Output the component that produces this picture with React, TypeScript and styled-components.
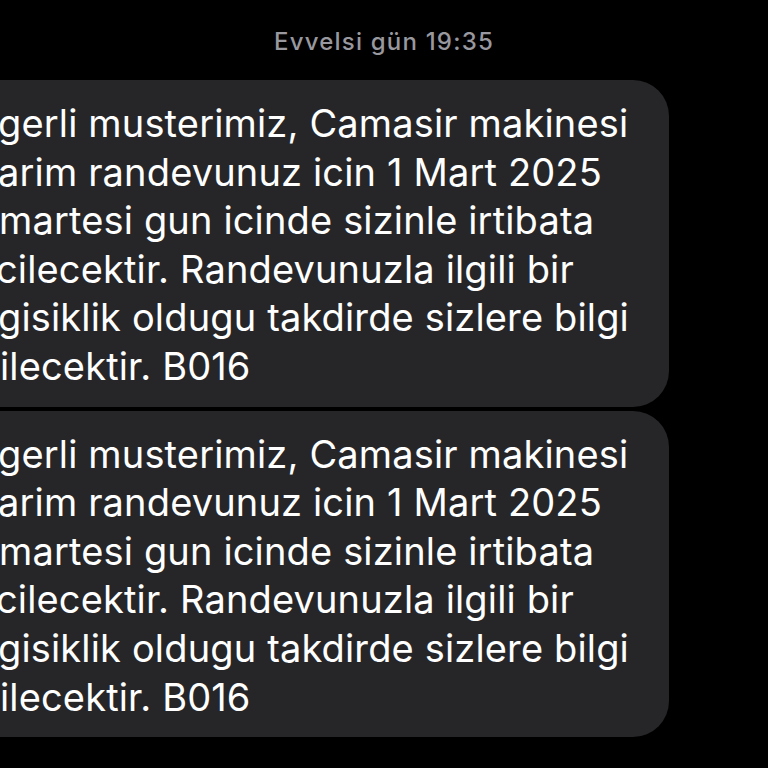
import React from "react";
import styled, { createGlobalStyle } from "styled-components";

const Global = createGlobalStyle`
  html, body { margin: 0; padding: 0; background: #000; }
  body { font-family: Inter, "Noto Sans", "Liberation Sans", sans-serif; -webkit-font-smoothing: antialiased; }
`;

const Page = styled.div`
  width: 768px;
  height: 768px;
  overflow: hidden;
  background: #000;
  display: flex;
  flex-direction: column;
`;

const Timestamp = styled.div`
  padding-top: 29px;
  height: 26px;
  line-height: 26px;
  margin-bottom: 25px;
  text-align: center;
  color: #98989e;
  font-size: 24px;
  font-weight: 500;
  letter-spacing: 1.2px;
`;

const Thread = styled.div`
  display: flex;
  flex-direction: column;
  gap: 4px;
`;

const Bubble = styled.div`
  margin-left: -40px;
  width: 709px;
  box-sizing: border-box;
  background: #262629;
  border-radius: 36px;
  padding: 19px 0 16px 38px;
  overflow: hidden;
`;

const Line = styled.div<{ $indent?: number }>`
  white-space: nowrap;
  color: #ffffff;
  font-size: 38px;
  line-height: 48.6px;
  letter-spacing: 0.15px;
  margin-left: ${(p) => p.$indent ?? 0}px;
`;

const lines: { text: string; indent: number }[] = [
  { text: "gerli musterimiz, Camasir makinesi", indent: 0 },
  { text: "arim randevunuz icin 1 Mart 2025", indent: 0 },
  { text: "martesi gun icinde sizinle irtibata", indent: 1 },
  { text: "cilecektir. Randevunuzla ilgili bir", indent: -2 },
  { text: "gisiklik oldugu takdirde sizlere bilgi", indent: 0 },
  { text: "ilecektir. B016", indent: 2 },
];

const Message = () => (
  <Bubble>
    {lines.map((l, i) => (
      <Line key={i} $indent={l.indent}>
        {l.text}
      </Line>
    ))}
  </Bubble>
);

export default function App() {
  return (
    <Page>
      <Global />
      <Timestamp>Evvelsi gün 19:35</Timestamp>
      <Thread>
        <Message />
        <Message />
      </Thread>
    </Page>
  );
}
